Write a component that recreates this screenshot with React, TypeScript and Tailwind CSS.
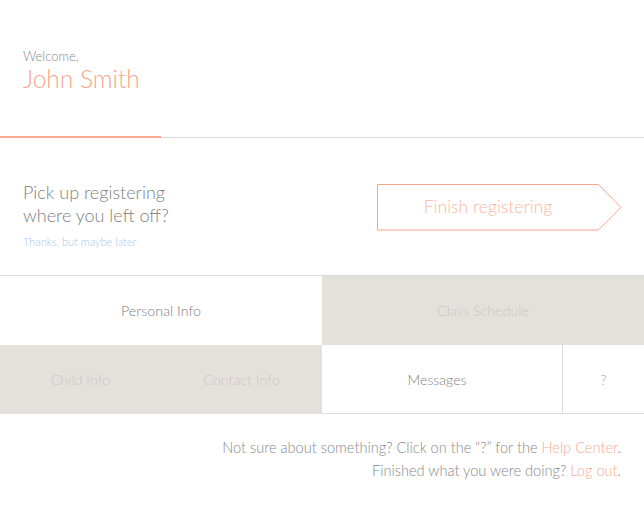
import React from "react";

const font = { fontFamily: "Lato, 'Open Sans', sans-serif" };

export default function App() {
  return (
    <div className="w-[644px] h-[506px] bg-white font-light text-[#777]" style={font}>
      {/* Header */}
      <div className="h-[136px] pl-[23px] pt-[47px]">
        <div className="text-[13px] leading-[18px] text-[#888]">Welcome,</div>
        <div className="text-[24.5px] leading-[27px] text-[#f8a58b]">John Smith</div>
      </div>
      <div className="flex items-start h-[2px]">
        <div className="w-[161px] h-[2px] bg-[#f8ab92]" />
        <div className="flex-1 h-[1px] mt-[1px] bg-[#dddddd]" />
      </div>
      {/* Pick up */}
      <div className="h-[137px] flex items-start justify-between pl-[23px] pr-[22px]">
        <div className="pt-[43px]">
          <div className="text-[18px] leading-[23px] text-[#808080]">Pick up registering<br />where you left off?</div>
          <div className="mt-[8px] text-[11px] leading-[14px] text-[#a8c6f4]">Thanks, but maybe later</div>
        </div>
        <div className="mt-[46px] relative w-[245px] h-[47px]">
          <svg className="absolute inset-0" width="245" height="47" viewBox="0 0 245 47">
            <path d="M0.5 0.5 H221.5 L244 23.5 L221.5 46 H0.5 Z" fill="none" stroke="#f8a58b" strokeWidth="1" />
          </svg>
          <div className="relative w-[222px] h-[47px] flex items-center justify-center text-[17.6px] text-[#f9b8a2]">
            Finish registering
          </div>
        </div>
      </div>
      {/* Grid */}
      <div className="border-t border-[#dddddd] grid grid-cols-[322px_1fr]">
        <div className="h-[69px] flex items-center justify-center text-[14.3px] text-[#808080] bg-white">Personal Info</div>
        <div className="h-[69px] flex items-center justify-center text-[14.3px] text-[#ccc8c4] bg-[#e4e0dc]">Class Schedule</div>
        <div className="h-[69px] grid grid-cols-2 bg-[#e4e0dc] text-[14.3px] text-[#ccc8c4]">
          <div className="flex items-center justify-center">Child Info</div>
          <div className="flex items-center justify-center">Contact Info</div>
        </div>
        <div className="h-[69px] flex border-b border-[#dddddd]">
          <div className="w-[241px] flex items-center justify-center pr-[10px] text-[14px] text-[#808080] border-r border-[#dddddd]">Messages</div>
          <div className="flex-1 flex items-center justify-center text-[14px] text-[#aaa]">?</div>
        </div>
      </div>
      {/* Footer */}
      <div className="pr-[23px] pt-[22px] text-right text-[14.6px] leading-[23px] text-[#888]">
        <div>Not sure about something? Click on the “?” for the <span className="text-[#f8ab92]">Help Center</span>.</div>
        <div>Finished what you were doing? <span className="text-[#f8ab92]">Log out</span>.</div>
      </div>
    </div>
  );
}
